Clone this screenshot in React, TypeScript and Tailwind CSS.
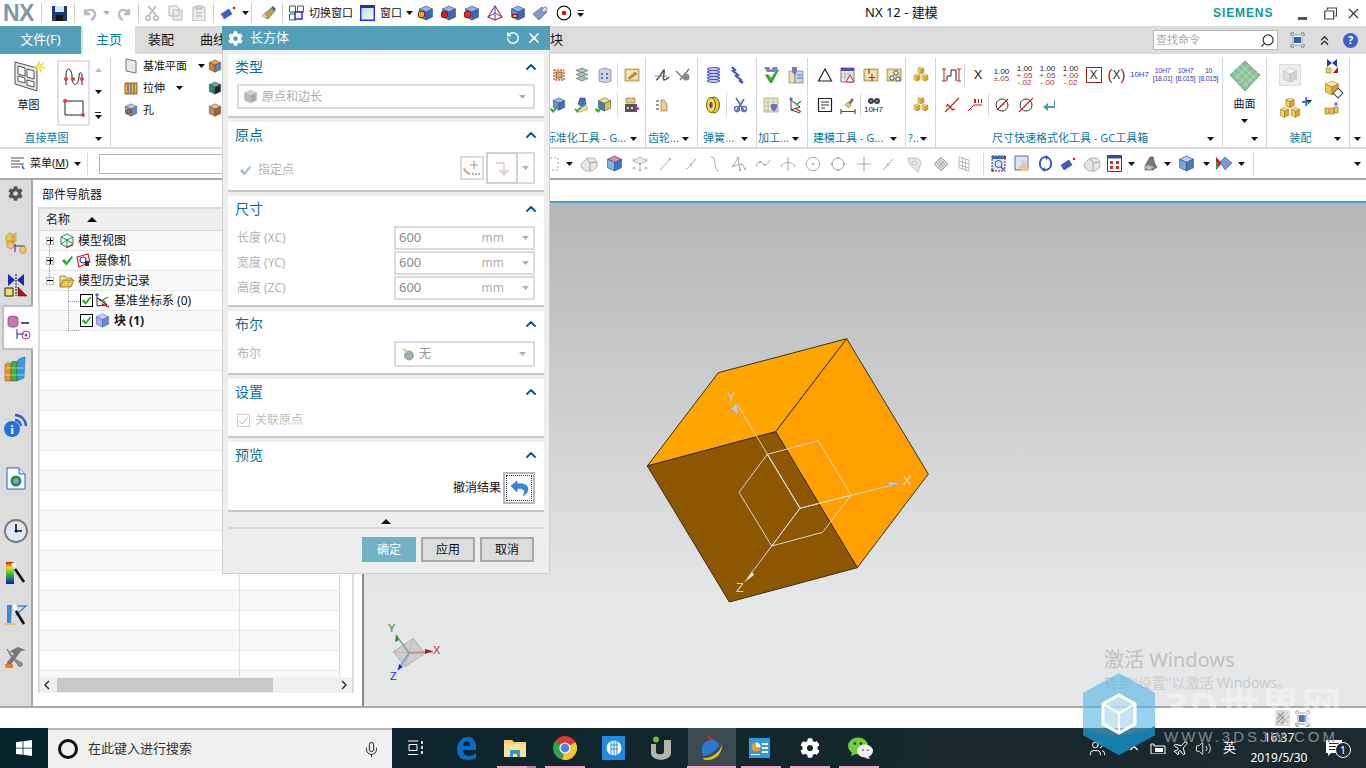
import { ChevronUp, Mic, Plane, RotateCw, Search, Volume2, X, Users, ChevronsUp } from 'lucide-react';
import { FaCog } from 'react-icons/fa';
import type { ReactNode } from 'react';

// small shared pieces
const Drop = ({ gray = false }: { gray?: boolean }) => (
  <svg width="7" height="4" viewBox="0 0 7 4" className="shrink-0">
    <path d="M0 0h7L3.5 4z" fill={gray ? '#b0b0b0' : '#111'} />
  </svg>
);

const Box = ({ s = 16, t = '#9dbbe8', l = '#6f93d8', r = '#4a6fc0', o = '#3a4a70' }: { s?: number; t?: string; l?: string; r?: string; o?: string }) => (
  <svg width={s} height={s} viewBox="0 0 16 16" className="shrink-0">
    <path d="M8 1l6.5 3L8 7 1.5 4z" fill={t} stroke={o} strokeWidth=".6" />
    <path d="M1.5 4L8 7v8l-6.5-3z" fill={l} stroke={o} strokeWidth=".6" />
    <path d="M14.5 4L8 7v8l6.5-3z" fill={r} stroke={o} strokeWidth=".6" />
  </svg>
);

const Ico = ({ w = 16, h = 16, children }: { w?: number; h?: number; children: ReactNode }) => (
  <svg width={w} height={h} viewBox={`0 0 ${w} ${h}`} className="shrink-0">
    {children}
  </svg>
);

const Check = ({ c = '#2fa82f', s = 14 }: { c?: string; s?: number }) => (
  <svg width={s} height={s} viewBox="0 0 14 14" className="shrink-0">
    <path d="M1 7.5l2.5-2 2.5 3L11.5 2 13 3.5 6 12.5z" fill={c} />
  </svg>
);

const YellowCubes = ({ s = 16 }: { s?: number }) => (
  <svg width={s} height={s} viewBox="0 0 16 16" className="shrink-0">
    {[
      [5, 0],
      [1, 7],
      [9, 7],
    ].map(([x, y]) => (
      <g key={`${x}-${y}`} transform={`translate(${x} ${y})`} stroke="#a88420" strokeWidth=".5">
        <path d="M3 0l3 1.3L3 2.6 0 1.3z" fill="#ffe9a0" />
        <path d="M0 1.3l3 1.3V7L0 5.7z" fill="#f6cf58" />
        <path d="M6 1.3L3 2.6V7l3-1.3z" fill="#d9a72c" />
      </g>
    ))}
  </svg>
);

const YellowCard = ({ mark }: { mark: 'cross' | 'circles' | 'pencil' }) => (
  <Ico>
    <path d="M1 2h14v12H1z" fill="#e8d48a" stroke="#8a7a50" strokeWidth=".7" />
    <path d="M3 4h10v8H3z" fill="#f3e6b8" />
    {mark === 'cross' && <path d="M9 7v7M5.5 10.5h7M6 2v5" stroke="#d02020" strokeWidth="1.2" fill="none" />}
    {mark === 'circles' && (
      <g fill="#fff" stroke="#333" strokeWidth=".9">
        <circle cx="10" cy="6" r="2.2" />
        <circle cx="6" cy="11" r="2.2" />
        <circle cx="12" cy="12" r="2.2" />
      </g>
    )}
    {mark === 'pencil' && <path d="M4 11l7-6 2 2-7 5z" fill="#e08a20" stroke="#555" strokeWidth=".5" />}
  </Ico>
);

const Gray = ({ kind }: { kind: number }) => {
  const c = '#a8a8a8';
  const p = { fill: 'none', stroke: c, strokeWidth: 1 };
  const dot = (x: number, y: number) => <circle cx={x} cy={y} r="1.3" fill="#b8b8b8" />;
  switch (kind) {
    case 0:
      return (
        <Ico>
          <path d="M2 2h12v12H2z" {...p} strokeDasharray="2 2" />
        </Ico>
      );
    case 1:
      return (
        <Ico w={18}>
          <path d="M1 8l6-6h7l3 4v5l-5 4H6L2 12z" fill="#e6e6e6" stroke="#b5b5b5" />
          <path d="M7 2l3 5v8M10 7l7-1" {...p} />
        </Ico>
      );
    case 2:
      return (
        <Ico w={18}>
          <path d="M9 1l7 4-7 3-7-3z M9 8v7" fill="#e8e8e8" stroke="#bbb" />
          {dot(3, 4)}
          {dot(15, 4)}
          {dot(3, 12)}
          {dot(15, 12)}
          {dot(9, 8)}
          {dot(9, 14)}
        </Ico>
      );
    case 3:
      return (
        <Ico>
          <path d="M3 14L13 3" {...p} />
          {dot(13, 3)}
        </Ico>
      );
    case 4:
      return (
        <Ico>
          <path d="M3 14L13 3" {...p} />
          {dot(8, 8.5)}
        </Ico>
      );
    case 5:
      return (
        <Ico>
          <path d="M4 1c7 0 1 13 8 14" {...p} />
        </Ico>
      );
    case 6:
      return (
        <Ico w={18}>
          <path d="M8 2l-5 8 9-2 3 5M8 2l2 12" {...p} />
          {dot(8, 2)}
          {dot(3, 10)}
          {dot(15, 13)}
          {dot(10, 14)}
        </Ico>
      );
    case 7:
      return (
        <Ico>
          <path d="M1 11c3-8 5-6 7-3s4 1 7-4" {...p} />
          {dot(5, 6)}
          {dot(10, 9)}
        </Ico>
      );
    case 8:
      return (
        <Ico>
          <path d="M8 1v14M1 11c1-6 13-6 14 0" {...p} />
        </Ico>
      );
    case 9:
      return (
        <Ico>
          <circle cx="8" cy="8" r="6.8" {...p} />
          {dot(8, 8)}
        </Ico>
      );
    case 10:
      return (
        <Ico>
          <circle cx="8" cy="8" r="6" {...p} />
          {dot(8, 2)}
          {dot(8, 14)}
          {dot(2, 8)}
          {dot(14, 8)}
        </Ico>
      );
    case 11:
      return (
        <Ico>
          <path d="M8 1v14M1 8h14" {...p} />
        </Ico>
      );
    case 12:
      return (
        <Ico w={18}>
          <path d="M2 2h8c3 0 5 3 5 5l-3 9C7 12 2 8 2 2z" fill="#e4e4e4" stroke="#c4c4c4" />
          <circle cx="8" cy="7" r="2" fill="#f5f5f5" stroke="#c0c0c0" />
        </Ico>
      );
    case 13:
      return (
        <Ico>
          <path d="M8 1l7 7-7 7-7-7z" fill="#d8d8d8" stroke="#aaa" />
          <path d="M4.5 4.5l7 7M11.5 4.5l-7 7M6 3l7 7M3 6l7 7" stroke="#999" strokeWidth=".6" />
        </Ico>
      );
    default:
      return (
        <Ico>
          <path d="M3 1l10 3v11L3 12z M3 5l10 3M3 9l10 3M6.5 2v11M9.5 3v11" fill="none" stroke="#aaa" strokeWidth=".8" />
        </Ico>
      );
  }
};

const Num = ({ a, b, c }: { a: string; b: string; c?: string }) => (
  <div className="flex flex-col items-center text-[8px] leading-[7px] font-['Liberation_Sans',sans-serif]">
    <span className="text-[#222]">{a}</span>
    <span className="text-[#b03030]">{b}</span>
    {c && <span className="text-[#b03030]">{c}</span>}
  </div>
);

const Hole = ({ l, b }: { l: string; b: string }) => (
  <div className="flex flex-col items-center text-[7px] leading-[8px] text-[#3a3ab8] font-['Liberation_Sans',sans-serif] tracking-[-0.3px]">
    <span>{l}</span>
    <span>{b}</span>
  </div>
);

const Slot = ({ w, children }: { w: number; children: ReactNode }) => (
  <div className="flex items-center justify-center shrink-0 h-full" style={{ width: w }}>
    {children}
  </div>
);

const VSep = () => <div className="w-px h-[24px] bg-[#d8d8d8] mx-[1px] shrink-0" />;

const Group = ({ w, label, children, labelClass = 'justify-center', line = true }: { w: number; label: string; children: ReactNode; labelClass?: string; line?: boolean }) => (
  <div className={`shrink-0 h-[89px] flex flex-col relative ${line ? 'border-r border-[#d4d4d4]' : ''}`} style={{ width: w }}>
    <div className="h-[72px] pt-[2px]">{children}</div>
    <div className={`h-[17px] flex items-center gap-[4px] text-[11px] text-[#0b7a9c] whitespace-nowrap ${labelClass}`}>
      <span>{label}</span>
    </div>
    <div className="absolute right-[8px] bottom-[6px]">
      <Drop />
    </div>
  </div>
);

const IconRow = ({ pl = 0, children }: { pl?: number; children: ReactNode }) => (
  <div className="h-[30px] flex items-center" style={{ paddingLeft: pl }}>
    {children}
  </div>
);

const Card = ({ title, h, children }: { title: string; h: number; children?: ReactNode }) => (
  <div className="bg-white border-b-2 border-[#c8c8c8] pl-[7px] pr-[9px] shrink-0 mb-[4px]" style={{ height: h }}>
    <div className="h-[24px] flex items-center justify-between pt-[1px]">
      <span className="text-[14px] text-[#0b6e8f]">{title}</span>
      <ChevronUp size={16} strokeWidth={3} className="text-[#0b5f7c] -mr-[4px]" />
    </div>
    {children}
  </div>
);

const Field = ({ label }: { label: string }) => (
  <div className="flex items-center justify-between h-[25px] pl-[2px]">
    <span className="text-[12px] text-[#b4b4b4]">{label}</span>
    <div className="w-[141px] h-[24px] border-2 border-[#dcdcdc] flex items-center justify-between pl-[3px] pr-[4px]">
      <span className="text-[13px] text-[#8a8a8a]">600</span>
      <div className="flex items-center gap-[18px]">
        <span className="text-[12px] text-[#b0b0b0]">mm</span>
        <Drop gray />
      </div>
    </div>
  </div>
);

const TreeCheck = () => (
  <span className="relative w-[13px] h-[13px] border-[1.5px] border-black bg-white shrink-0 flex items-center justify-center">
    <Check s={11} c="#1fb31f" />
  </span>
);

const Plus = ({ minus = false }: { minus?: boolean }) => (
  <span className="w-[8px] h-[8px] border border-[#b8b8b8] bg-white shrink-0 flex items-center justify-center relative text-[8px]">
    <span className="w-[6px] h-px bg-black" />
    {!minus && <span className="absolute h-[6px] w-px bg-black" />}
  </span>
);

const TreeRow = ({ i, children, pl = 46 }: { i: number; children?: ReactNode; pl?: number }) => (
  <div className={`h-[20px] shrink-0 border-b border-[#e8e8e8] flex items-center text-[12px] text-[#111] ${i % 2 ? 'bg-white' : 'bg-[#f9f9f9]'}`} style={{ paddingLeft: pl - 40 }}>
    {children}
  </div>
);

// resource bar button, 40px slot unless told otherwise
const SideBtn = ({ h = 40, mt = 0, children }: { h?: number; mt?: number; children: ReactNode }) => (
  <div className="flex items-center justify-center shrink-0" style={{ height: h, marginTop: mt }}>
    {children}
  </div>
);

export default function App() {
  return (
    <div className="relative w-[1366px] h-[768px] overflow-hidden flex flex-col bg-white font-['Noto_Sans','Noto_Sans_CJK_SC',sans-serif] text-[12px]">
      {/* title bar */}
      <div className="h-[26px] shrink-0 flex items-center relative">
        <div className="w-[865px] shrink-0 flex items-center">
          <span className="ml-[3px] w-[33px] text-[23px] leading-none font-bold text-[#7f97a9] font-['Liberation_Sans',sans-serif] tracking-[-0.5px]">NX</span>
          <div className="w-px h-[20px] bg-[#d0d0d0] ml-[5px] mr-[10px]" />
          <Ico w={15} h={15}>
            <path d="M0 0h15v15H0z" fill="#1c3a78" />
            <path d="M3 0h9v6H3z" fill="#d8e0f0" />
            <path d="M4 9h7v6H4z" fill="#111" />
          </Ico>
          <div className="w-px h-[20px] bg-[#d0d0d0] ml-[7px] mr-[7px]" />
          <Ico w={15} h={15}>
            <path d="M3 3v5h5M3 8c2-5 9-6 10 0 0 3-2 5-4 6" fill="none" stroke="#b4bcc4" strokeWidth="2.4" />
          </Ico>
          <div className="ml-[6px] mr-[7px]"><Drop gray /></div>
          <Ico w={15} h={15}>
            <path d="M12 3v5H7M12 8C10 3 3 2 2 8c0 3 2 5 4 6" fill="none" stroke="#b4bcc4" strokeWidth="2.4" />
          </Ico>
          <div className="w-px h-[20px] bg-[#d0d0d0] ml-[6px] mr-[6px]" />
          <Ico w={14} h={16}>
            <path d="M11 1L4 10M3 1l8 9" stroke="#b5b5b5" strokeWidth="1.5" fill="none" />
            <circle cx="3" cy="13" r="2.2" fill="none" stroke="#b5b5b5" strokeWidth="1.4" />
            <circle cx="11" cy="13" r="2.2" fill="none" stroke="#b5b5b5" strokeWidth="1.4" />
          </Ico>
          <div className="w-[9px]" />
          <Ico w={15} h={16}>
            <path d="M1 1h8l2 3v7H1zM5 5h9v10H5z" fill="#eee" stroke="#b8b8b8" />
          </Ico>
          <div className="w-[9px]" />
          <Ico w={14} h={16}>
            <path d="M1 2h12v14H1z" fill="#eee" stroke="#b8b8b8" />
            <path d="M4 1h6v3H4zM4 8h6M4 11h6" fill="#ddd" stroke="#b0b0b0" />
          </Ico>
          <div className="w-px h-[20px] bg-[#d0d0d0] ml-[7px] mr-[6px]" />
          <Ico w={17} h={16}>
            <path d="M1 9l8-5 3 5-8 5z" fill="#3f5fc0" stroke="#223a80" strokeWidth=".5" />
            <path d="M1 9l3 5 0-2z" fill="#88a4e8" />
            <circle cx="14" cy="3" r="1.3" fill="#e02020" />
          </Ico>
          <div className="ml-[5px]"><Drop /></div>
          <div className="w-px h-[20px] bg-[#d0d0d0] mr-[8px] ml-[2px]" />
          <Ico w={17} h={16}>
            <path d="M2 11l9-8 4 3-7 8z" fill="#c89a50" stroke="#665" strokeWidth=".6" />
            <path d="M11 3l4 3 1-2-3-3z" fill="#4a5f90" />
            <path d="M1 13l3-4 3 3z" fill="#e8d8a0" />
          </Ico>
          <div className="w-px h-[20px] bg-[#d0d0d0] ml-[5px] mr-[6px]" />
          <Ico w={15} h={16}>
            <path d="M.5 1h6v6h-6zM8.5 1h6v6h-6zM.5 9h6v6h-6z" fill="#fff" stroke="#555" />
            <path d="M6 7h7v7H6z" fill="#fff" stroke="#1a2ee0" strokeWidth="1.5" />
          </Ico>
          <span className="ml-[5px] text-[11px] text-[#111] whitespace-nowrap">切换窗口</span>
          <div className="w-[7px]" />
          <Ico w={15} h={16}>
            <defs>
              <linearGradient id="win" x1="0" y1="0" x2="1" y2="1">
                <stop offset="0" stopColor="#bcd2ea" />
                <stop offset="1" stopColor="#fff" />
              </linearGradient>
            </defs>
            <path d="M.7.7h13.6v14.6H.7z" fill="url(#win)" stroke="#1a2ee0" strokeWidth="1.4" />
            <path d="M1 2h13" stroke="#223a80" strokeWidth="2" />
          </Ico>
          <span className="ml-[5px] text-[11px] text-[#111] whitespace-nowrap">窗口</span>
          <div className="ml-[4px] mr-[5px]"><Drop /></div>
          {['#e8b020', '#d02020', '#e83020'].map((c) => (
            <div key={c} className="relative mr-[7px] w-[16px] h-[16px]">
              <Box s={16} t="#8fb5f0" l="#5a86dc" r="#3a66c0" />
              <span className="absolute left-[0px] top-[6px] w-[7px] h-[7px] rounded-[2px] border border-[#a01010]" style={{ background: c }} />
            </div>
          ))}
          <Ico w={16} h={16}>
            <path d="M8 1L1 12l7 3 7-3z" fill="none" stroke="#d03030" strokeWidth="1.2" />
            <path d="M8 1v14M1 12l7-4 7 4" fill="none" stroke="#3050c0" strokeWidth="1" />
          </Ico>
          <div className="w-[7px]" />
          <div className="relative w-[16px] h-[16px] mr-[6px]">
            <Box s={16} t="#8fb5f0" l="#5a86dc" r="#3a66c0" />
            <span className="absolute left-[2px] top-[9px] w-[6px] h-[4px] bg-[#e8a020] border border-[#a01010]" />
          </div>
          <Ico w={16} h={16}>
            <path d="M1 9l9-7 5 5-8 8z" fill="#7f9cc8" stroke="#456" strokeWidth=".6" />
            <ellipse cx="12.5" cy="4.5" rx="2" ry="3" transform="rotate(45 12.5 4.5)" fill="#d8e4f4" stroke="#456" strokeWidth=".6" />
          </Ico>
          <div className="w-[8px]" />
          <Ico w={16} h={16}>
            <circle cx="8" cy="8" r="6.8" fill="#fff" stroke="#111" strokeWidth="1.2" />
            <circle cx="8" cy="8" r="2.3" fill="#d01818" />
          </Ico>
          <div className="ml-[5px] flex flex-col gap-[2px] items-center">
            <div className="w-[6px] h-px bg-[#333]" />
            <Drop />
          </div>
        </div>
        <span className="w-[348px] shrink-0 text-[13px] text-[#111] whitespace-nowrap">NX 12 - 建模</span>
        <span className="text-[12px] font-bold text-[#0f9a9a] font-['Liberation_Sans',sans-serif] tracking-[0.9px]">SIEMENS</span>
        <div className="ml-auto mr-[4px] flex items-center">
          <div className="w-[9px] h-[3px] bg-[#555] mt-[10px] mr-[17px]" />
          <Ico w={13} h={13}>
            <path d="M3.5 3V1h9v8h-2" fill="none" stroke="#444" strokeWidth="1.2" />
            <path d="M.7 4h9v8h-9z" fill="#fff" stroke="#444" strokeWidth="1.2" />
          </Ico>
          <X size={17} strokeWidth={1.6} className="text-[#333] ml-[8px]" />
        </div>
      </div>

      {/* ribbon tabs */}
      <div className="h-[28px] shrink-0 bg-[#dcdcdc] flex items-stretch text-[13px]">
        <div className="w-[81px] bg-[#55a0b9] text-white flex items-center justify-center">文件(F)</div>
        <div className="w-[52px] ml-[2px] bg-white text-[#0b7a9c] flex items-center justify-center">主页</div>
        <span className="ml-[13px] self-center text-[#111]">装配</span>
        <span className="ml-[26px] self-center text-[#111]">曲线</span>
        <span className="ml-[324px] self-center text-[#111]">块</span>
        <div className="ml-[590px] mt-[4px] w-[125px] h-[20px] bg-white border border-[#b8b8b8] flex items-center justify-between px-[2px] text-[11px] text-[#a8a8a8]">
          <span>查找命令</span>
          <Search size={15} className="text-[#333] -scale-x-100" />
        </div>
        <div className="ml-[12px] self-center">
          <Ico w={15} h={16}>
            <path d="M1 4V1h3M11 1h3v3M14 12v3h-3M4 15H1v-3" fill="none" stroke="#777" />
            <path d="M3 3h9v10H3z" fill="#fff" stroke="#999" />
            <path d="M4 5h7v6H4z" fill="#2d62b0" />
          </Ico>
        </div>
        <ChevronsUp size={15} className="self-center ml-[12px] text-[#222]" />
        <div className="self-center ml-[11px] w-[15px] h-[15px] rounded-full bg-[#3a62c8] text-white text-[11px] font-bold flex items-center justify-center">?</div>
      </div>

      {/* ribbon body */}
      <div className="h-[93px] shrink-0 flex items-start pt-[4px] bg-white">
        <Group w={111} label="直接草图" labelClass="justify-center pr-[17px]">
          <div className="flex h-full">
            <div className="w-[57px] flex flex-col items-center">
              <Ico w={32} h={32}>
                <path d="M2 2l22 6v23L2 24z" fill="#e4e4e4" stroke="#555" />
                <path d="M5 6l7 2v8l-7-2zM14 9l7 2v8l-7-2zM5 16l7 2v5l-7-2zM14 20l7 2v5l-7-2z" fill="#fff" stroke="#555" />
                <path d="M26 1l1 4 4-2-3 3 4 2-4 0 0 4-2-3-3 2 1-3-4-1 4-1z" fill="#f4ee50" stroke="#d8c830" strokeWidth=".5" />
              </Ico>
              <span className="mt-[5px] text-[11px] text-[#111]">草图</span>
            </div>
            <div className="w-[33px] h-[66px] border-2 border-[#e2e2e2] flex flex-col items-center justify-around py-[2px]">
              <Ico w={24} h={24}>
                <path d="M4 18V8c0-8 6-8 6 2s6 10 7 0c0-5 2-6 3-2v10" fill="none" stroke="#222" />
                <circle cx="4" cy="12" r="2" fill="#d84040" />
                <circle cx="11" cy="12" r="2" fill="#d84040" />
                <circle cx="20" cy="12" r="2" fill="#d84040" />
              </Ico>
              <Ico w={24} h={24}>
                <path d="M3 5h18v14H3z" fill="none" stroke="#222" />
                <circle cx="3" cy="5" r="2" fill="#d84040" />
                <circle cx="21" cy="19" r="2" fill="#d84040" />
              </Ico>
            </div>
            <div className="w-[16px] flex flex-col items-center pt-[8px] gap-[18px]">
              <svg width="7" height="4" viewBox="0 0 7 4"><path d="M0 4h7L3.5 0z" fill="#bbb" /></svg>
              <Drop />
              <div className="flex flex-col items-center gap-[2px]">
                <div className="w-[6px] h-px bg-[#222]" />
                <Drop />
              </div>
            </div>
          </div>
        </Group>

        <Group w={359} label="" line={false}>
          <div className="pl-[13px] -mt-[5px] flex">
            <div className="flex flex-col w-[84px] text-[11px]">
              <div className="h-[22px] flex items-center gap-[5px] text-[#111]">
                <Ico w={14} h={16}>
                  <path d="M2 1l10 2v12l-10-2z" fill="#e8ebe4" stroke="#777" />
                </Ico>
                基准平面
                <div className="ml-[6px]"><Drop /></div>
              </div>
              <div className="h-[22px] flex items-center gap-[5px] text-[#111]">
                <Ico w={14} h={16}>
                  <path d="M1 3h12v11H1z" fill="#f0b040" stroke="#a06010" />
                  <path d="M4 3v11M7 3v11M10 3v11" stroke="#2a60c0" />
                </Ico>
                拉伸
                <div className="ml-[6px]"><Drop /></div>
              </div>
              <div className="h-[22px] flex items-center gap-[5px] text-[#111]">
                <div className="relative w-[14px] h-[14px]">
                  <Box s={14} t="#b8c8e8" l="#8da6d8" r="#6b88c8" />
                  <span className="absolute left-[2px] top-[6px] w-[5px] h-[5px] rounded-full bg-[#e07020] border border-[#902010]" />
                </div>
                孔
              </div>
            </div>
            <div className="flex flex-col">
              <div className="h-[22px] flex items-center"><Box s={14} t="#f0a040" l="#d88020" r="#6080c0" /></div>
              <div className="h-[22px] flex items-center"><Box s={14} t="#60b0a0" l="#308070" r="#222" /></div>
              <div className="h-[22px] flex items-center"><Box s={14} t="#f0c080" l="#d88040" r="#b06020" /></div>
            </div>
          </div>
        </Group>

        <Group w={176} label="标准化工具 - G..." labelClass="justify-end pr-[19px]">
          <div className="flex flex-col items-end">
            <IconRow>
              <Slot w={23}>
                <Ico w={14} h={14}>
                  <path d="M2 2h10v10H2z" fill="#f4e6c0" stroke="#d02020" strokeDasharray="2 1" />
                  <path d="M4 4h6v6H4z" fill="#e8b040" stroke="#333" strokeWidth=".6" />
                </Ico>
              </Slot>
              <Slot w={23}>
                <Ico w={14} h={16}>
                  {[1, 5, 9].map((y) => (
                    <path key={y} d={`M7 ${y}l6 2.5-6 2.5-6-2.5z`} fill="#a8c8a8" stroke="#557" strokeWidth=".6" />
                  ))}
                </Ico>
              </Slot>
              <Slot w={23}>
                <Ico w={14} h={16}>
                  <path d="M1 3l6-2 6 2v11l-6 2-6-2z" fill="#c8d4e8" stroke="#667" strokeWidth=".6" />
                  <path d="M3 6h2v2H3zM8 6h2v2H8zM3 10h2v2H3zM8 10h2v2H8z" fill="#5a7ab0" />
                </Ico>
              </Slot>
              <VSep />
              <Slot w={26}><YellowCard mark="pencil" /></Slot>
            </IconRow>
            <IconRow>
              <Slot w={23}>
                <div className="relative w-[14px] h-[16px]">
                  <Box s={14} />
                  <div className="absolute left-[-3px] bottom-[-1px]"><Check s={10} /></div>
                </div>
              </Slot>
              <Slot w={23}>
                <Ico w={16} h={16}>
                  <path d="M6 1h5l1 6-4 3-4-3z" fill="#4a6fc8" stroke="#234" strokeWidth=".5" />
                  <path d="M2 15l10-7 2 4-8 3z" fill="#f0e090" stroke="#665" strokeWidth=".5" />
                  <path d="M1 12l2 2 4-4" stroke="#2aa82a" strokeWidth="1.6" fill="none" />
                </Ico>
              </Slot>
              <Slot w={23}>
                <div className="relative w-[16px] h-[16px]">
                  <Box s={15} t="#f4e080" l="#4a78d0" r="#e8c040" />
                  <div className="absolute left-[-3px] bottom-[-1px]"><Check s={10} /></div>
                </div>
              </Slot>
              <VSep />
              <Slot w={26}>
                <Ico w={16} h={16}>
                  <path d="M2 1h9v5H2z" fill="#e8c878" stroke="#765" strokeWidth=".6" />
                  <path d="M1 7h12v8H1z" fill="#555" />
                  <path d="M3 10h2v2H3zM7 10h2v2H7z" fill="#e8d8a0" />
                  <path d="M12 9l4 2.5-4 2.5z" fill="#b040c0" />
                </Ico>
              </Slot>
            </IconRow>
          </div>
        </Group>

        <Group w={52} label="齿轮..." labelClass="pl-[2px] justify-start">
          <IconRow pl={5}>
            <Slot w={21}>
              <Ico w={16} h={14}>
                <path d="M2 12c4-2 6-9 8-10 1 3-2 8 0 10 1 0 3-1 5-3" fill="none" stroke="#555" strokeWidth="1.6" />
                <path d="M1 8h12" stroke="#888" />
              </Ico>
            </Slot>
            <Slot w={21}>
              <Ico w={17} h={14}>
                <path d="M2 3l7 7M15 1L6 12" stroke="#777" strokeWidth="1.4" fill="none" />
                <circle cx="12" cy="9" r="3.5" fill="#888" />
              </Ico>
            </Slot>
          </IconRow>
          <IconRow pl={5}>
            <Slot w={21}>
              <Ico w={14} h={14}>
                <path d="M1 3h3M1 7h3M1 11h3" stroke="#333" />
                <path d="M6 2h3l3 4v7H6z" fill="#f0c890" stroke="#864" strokeWidth=".6" />
              </Ico>
            </Slot>
          </IconRow>
        </Group>

        <Group w={59} label="弹簧..." labelClass="pl-[5px] justify-start">
          <IconRow pl={3}>
            <Slot w={24}>
              <Ico w={13} h={16}>
                {[2, 5, 8, 11, 14].map((y) => (
                  <ellipse key={y} cx="6.5" cy={y} rx="6" ry="1.3" fill="none" stroke="#4a58b8" strokeWidth="1.3" />
                ))}
              </Ico>
            </Slot>
            <Slot w={24}>
              <Ico w={14} h={18}>
                <path d="M2 1l3 3-2 1 5 4-2 1 5 4-1 1 3 2" fill="none" stroke="#4a58b8" strokeWidth="2.2" />
              </Ico>
            </Slot>
          </IconRow>
          <IconRow pl={3}>
            <Slot w={24}>
              <Ico w={14} h={18}>
                <ellipse cx="8" cy="9" rx="5.5" ry="8" fill="#e8c838" stroke="#776010" />
                <ellipse cx="5" cy="9" rx="4.5" ry="7.5" fill="#f0d858" stroke="#776010" />
                <ellipse cx="5" cy="9" rx="1.6" ry="3" fill="#555" />
              </Ico>
            </Slot>
            <VSep />
            <Slot w={24}>
              <Ico w={15} h={17}>
                <path d="M3 1l9 14M11 2L3 15" stroke="#5a6a9a" strokeWidth="1.5" fill="none" />
                <circle cx="4" cy="12" r="2.5" fill="none" stroke="#5a70c8" strokeWidth="1.4" />
                <circle cx="11" cy="12" r="2.5" fill="none" stroke="#5a70c8" strokeWidth="1.4" />
              </Ico>
            </Slot>
          </IconRow>
        </Group>

        <Group w={51} label="加工..." labelClass="pl-[1px] justify-start">
          <IconRow pl={1}>
            <Slot w={25}>
              <Ico w={16} h={18}>
                <path d="M1 1h5l2 3 2-3h5l-3 5H4z" fill="#8a7ac8" />
                <path d="M2 9l3-1 3 4 6-9 2 1-7 13h-2z" fill="#38a838" />
              </Ico>
            </Slot>
            <Slot w={25}>
              <Ico w={16} h={18}>
                <path d="M1 5h6v12H1z" fill="#e8e0b0" stroke="#776" strokeWidth=".6" />
                <path d="M7 5h8v12H7z" fill="#c8d8f0" stroke="#567" strokeWidth=".6" />
                <path d="M4 1h5v5l-2 3-3-3z" fill="#7a78c8" />
                <path d="M9 9h5M9 12h5" stroke="#5070b0" />
              </Ico>
            </Slot>
          </IconRow>
          <IconRow pl={1}>
            <Slot w={25}>
              <div className="relative">
                <Ico w={16} h={16}>
                  <path d="M1 1h14v14H1z" fill="#f0e8c0" stroke="#999" strokeWidth=".7" />
                  <path d="M1 5h14M1 9h14M1 13h14M5 1v14M10 1v14" stroke="#b8b8a0" strokeWidth=".7" />
                  <path d="M8 7h6v4l-3 4-3-4z" fill="#6a70c8" />
                </Ico>
              </div>
            </Slot>
            <Slot w={25}>
              <Ico w={17} h={17}>
                <path d="M4 3v10l9-3zM4 13l9 3" fill="#eee" stroke="#444" />
                <path d="M4 0v4M2 2h4" stroke="#3050c0" />
                <path d="M9 8l5-4" stroke="#2aa82a" strokeWidth="1.4" />
                <path d="M8 11l6 4" stroke="#d02020" strokeWidth="1.4" />
              </Ico>
            </Slot>
          </IconRow>
        </Group>

        <Group w={98} label="建模工具 - G..." labelClass="pl-[5px] justify-start">
          <IconRow pl={5}>
            <Slot w={23}>
              <Ico>
                <path d="M8 2l6.5 12h-13z" fill="none" stroke="#222" strokeWidth="1.2" />
              </Ico>
            </Slot>
            <Slot w={23}>
              <div className="relative">
                <Ico w={15} h={16}>
                  <path d="M1 1h13v14H1z" fill="#eee" stroke="#777" />
                  <path d="M1 1h13v3H1z" fill="#4a56a8" />
                  <path d="M1 7h13M1 10h13M5 4v11M9 4v11" stroke="#bbb" />
                  <path d="M10 8l4 7H6z" fill="#fff" stroke="#d02020" />
                </Ico>
              </div>
            </Slot>
            <Slot w={23}><YellowCard mark="cross" /></Slot>
            <Slot w={23}><YellowCard mark="circles" /></Slot>
          </IconRow>
          <IconRow pl={5}>
            <Slot w={23}>
              <Ico>
                <path d="M1.5 1.5h13v13h-13z" fill="#fff" stroke="#222" strokeWidth="1.2" />
                <path d="M4 5h8M4 8h8M4 11h4" stroke="#333" />
              </Ico>
            </Slot>
            <Slot w={23}>
              <Ico w={16} h={17}>
                <path d="M12 1l2 2-4 5-2-2z" fill="#807090" />
                <path d="M8 5l3 3-2 3-4-3z" fill="#e8c858" stroke="#765" strokeWidth=".5" />
                <path d="M1 12v5M15 12v5M1 14.5h14" stroke="#c02020" strokeWidth="1.2" />
              </Ico>
            </Slot>
            <VSep />
            <Slot w={23}>
              <div className="flex flex-col items-center">
                <Ico w={14} h={8}>
                  <circle cx="4" cy="4" r="3" fill="#444" />
                  <circle cx="10" cy="4" r="3" fill="#444" />
                  <circle cx="4" cy="4" r="1" fill="#88a" />
                  <circle cx="10" cy="4" r="1" fill="#88a" />
                </Ico>
                <span className="text-[8px] leading-[9px] text-[#222] font-['Liberation_Sans',sans-serif]">10H7</span>
              </div>
            </Slot>
          </IconRow>
        </Group>

        <Group w={30} label="?.." labelClass="pl-[2px] justify-start">
          <IconRow>
            <Slot w={30}><YellowCubes /></Slot>
          </IconRow>
          <IconRow>
            <Slot w={30}><YellowCubes /></Slot>
          </IconRow>
        </Group>

        <Group w={287} label="尺寸快速格式化工具 - GC工具箱" labelClass="pl-[56px] justify-start">
          <IconRow pl={4}>
            <Slot w={23}>
              <Ico w={19} h={16}>
                <path d="M2 2v12M0 2h4M0 14h4M17 2v12M15 2h4M15 14h4" stroke="#c02020" fill="none" />
                <path d="M5 14V9h4V3h5v11" fill="none" stroke="#222" />
              </Ico>
            </Slot>
            <VSep />
            <Slot w={24}>
              <span className="text-[13px] text-[#222] font-['Liberation_Sans',sans-serif]">X</span>
            </Slot>
            <Slot w={23}><Num a="1.00" b="±.05" /></Slot>
            <Slot w={23}><Num a="1.00" b="+.05" c="-.02" /></Slot>
            <Slot w={23}><Num a="1.00" b="+.05" c="-.00" /></Slot>
            <Slot w={23}><Num a="1.00" b="+.00" c="-.02" /></Slot>
            <Slot w={23}>
              <span className="w-[16px] h-[16px] border border-[#9c2020] flex items-center justify-center text-[12px] text-[#333] font-['Liberation_Sans',sans-serif]">X</span>
            </Slot>
            <Slot w={23}>
              <span className="flex items-center text-[12px] text-[#333] font-['Liberation_Sans',sans-serif]"><span className="text-[#a02020] text-[15px]">(</span>X<span className="text-[#a02020] text-[15px]">)</span></span>
            </Slot>
            <Slot w={23}>
              <span className="text-[8px] text-[#3a3ab8] font-['Liberation_Sans',sans-serif]">10H7</span>
            </Slot>
            <Slot w={23}><Hole l="10H7" b="[18.01]" /></Slot>
            <Slot w={23}><Hole l="10H7" b="[8.015]" /></Slot>
            <Slot w={23}><Hole l="10" b="[8.015]" /></Slot>
          </IconRow>
          <IconRow pl={4}>
            <Slot w={23}>
              <Ico w={16} h={16}>
                <path d="M1 15L15 1M3 7l6 6M3 8l-1 2M9 13l2-1" stroke="#c02020" fill="none" strokeWidth="1.1" />
              </Ico>
            </Slot>
            <Slot w={24}>
              <Ico w={16} h={14}>
                <path d="M1 13l6-6h8M3 10l2 2" stroke="#c02020" fill="none" />
                <path d="M7 1h2v4H7zM11 1h1v4h-1zM14 1h1v4h-1z" fill="#c02020" />
              </Ico>
            </Slot>
            <VSep />
            <Slot w={24}>
              <Ico w={16} h={16}>
                <circle cx="8" cy="8" r="6" fill="none" stroke="#333" />
                <path d="M3 13L14 2M6 9l4-2" stroke="#c02020" strokeWidth="1.1" />
              </Ico>
            </Slot>
            <Slot w={24}>
              <Ico w={16} h={16}>
                <circle cx="8" cy="8" r="6" fill="none" stroke="#333" />
                <path d="M1 15L15 1" stroke="#c02020" strokeWidth="1.1" />
              </Ico>
            </Slot>
            <Slot w={21}>
              <Ico w={12} h={12}>
                <path d="M11 1v6H5V4L0 8l5 4V9h7V1z" fill="#4aa0a8" />
              </Ico>
            </Slot>
          </IconRow>
        </Group>

        <Group w={44} label="">
          <div className="flex flex-col items-center">
            <Ico w={32} h={32}>
              <path d="M1 15L16 1l15 14-15 16z" fill="#8ac09c" stroke="#5a9070" strokeWidth=".7" />
              <path d="M4 12l15 14M8 8l15 14M12 5l15 14M6 19L21 4M10 23L26 8M14 27L29 12" stroke="#d8eadc" strokeWidth=".6" />
            </Ico>
            <span className="mt-[4px] text-[11px] text-[#111]">曲面</span>
            <div className="mt-[6px]"><Drop /></div>
          </div>
        </Group>

        <Group w={83} label="装配" labelClass="justify-center pr-[15px]">
          <div className="flex h-full pl-[12px]">
            <div className="w-[30px] flex flex-col items-start pt-[4px]">
              <div className="w-[22px] h-[22px] border border-[#ddd] bg-[#eee] flex items-center justify-center">
                <Box s={16} t="#f4f4f4" l="#e0e0e0" r="#d0d0d0" o="#c0c0c0" />
              </div>
              <div className="relative mt-[12px]">
                <YellowCubes s={22} />
                <span className="absolute -right-[10px] -top-[5px] text-[#2a70e0] text-[17px] font-bold leading-none">+</span>
              </div>
            </div>
            <div className="pt-[32px] w-[13px]"><div className="mt-[8px] -ml-[4px]"><Drop /></div></div>
            <div className="flex flex-col items-center gap-[6px] w-[20px] -mt-[1px]">
              <Ico w={14} h={15}>
                <path d="M2 0l5 4 5-4v8L7 4 2 8z" fill="#2a3ac0" />
                <path d="M1 9h5v5H1z" fill="#f0d050" stroke="#654" strokeWidth=".5" />
                <path d="M8 14l5-6v6z" fill="#b01818" />
              </Ico>
              <div className="relative">
                <Box s={16} t="#fce8a8" l="#f0c850" r="#dca028" o="#9a7a20" />
                <span className="absolute right-[-2px] bottom-[-1px] w-[8px] h-[8px] bg-white border border-[#444] rotate-45" />
              </div>
              <Ico w={16} h={13}>
                <path d="M1 6h4v6H1zM6 6h4v6H6zM10 5h4v6h-4z" fill="#f0c060" stroke="#a07820" strokeWidth=".7" />
                <path d="M12 0v4M10 2h4" stroke="#2a70e0" strokeWidth="1.2" />
              </Ico>
            </div>
          </div>
        </Group>

        <div className="w-[16px] h-[89px] relative">
          <div className="absolute right-[5px] bottom-[6px]"><Drop /></div>
        </div>
      </div>

      {/* secondary toolbar */}
      <div className="h-[33px] shrink-0 border-t-2 border-[#dcdcdc] border-b-2 border-b-[#a8a8a8] flex items-center">
        <div className="pl-[10px] w-[87px] flex items-center shrink-0">
          <Ico w={16} h={15}>
            <path d="M1 2h13M1 5h9M1 8h13M1 11h9" stroke="#555" />
            <path d="M11 7l4 6-2 0 0 2z" fill="#3a72c0" />
          </Ico>
          <span className="ml-[4px] text-[11px] text-[#111]">菜单(<span className="underline">M</span>)</span>
          <div className="ml-[5px]"><Drop /></div>
        </div>
        <div className="w-px h-[22px] bg-[#d8d8d8]" />
        <div className="ml-[11px] w-[130px] h-[20px] border border-[#b4b4b4] shrink-0" />
        <div className="ml-[313px] flex items-center h-full">
          <Slot w={20}><Gray kind={0} /></Slot>
          <Slot w={14}><Drop /></Slot>
          <Slot w={26}><Gray kind={1} /></Slot>
          <Slot w={25}><Box s={17} t="#e88a9a" l="#7ab8e8" r="#3a78c8" /></Slot>
          <Slot w={25}><Gray kind={2} /></Slot>
          <Slot w={26}><Gray kind={3} /></Slot>
          <Slot w={25}><Gray kind={4} /></Slot>
          <Slot w={23}><Gray kind={5} /></Slot>
          <Slot w={25}><Gray kind={6} /></Slot>
          <Slot w={24}><Gray kind={7} /></Slot>
          <Slot w={25}><Gray kind={8} /></Slot>
          <Slot w={25}><Gray kind={9} /></Slot>
          <Slot w={26}><Gray kind={10} /></Slot>
          <Slot w={25}><Gray kind={11} /></Slot>
          <Slot w={24}><Gray kind={4} /></Slot>
          <Slot w={30}><Gray kind={12} /></Slot>
          <Slot w={22}><Gray kind={13} /></Slot>
          <Slot w={23}><Gray kind={14} /></Slot>
        </div>
        <div className="w-px h-[22px] bg-[#d8d8d8] ml-[8px]" />
        <div className="flex items-center h-full ml-[3px]">
          <Slot w={23}>
            <Ico w={15} h={17}>
              <path d="M1 1h13v15H1z" fill="#dbe6f4" stroke="#1a2ea8" strokeDasharray="2 1" />
              <path d="M1 1h13v3H1z" fill="#4a66b8" />
              <circle cx="7.5" cy="9" r="3.5" fill="none" stroke="#555" />
              <path d="M10 12l3 3" stroke="#555" strokeWidth="1.4" />
              <circle cx="1.5" cy="15.5" r="1.3" fill="#d02020" />
              <circle cx="14" cy="2" r="1.3" fill="#d02020" />
            </Ico>
          </Slot>
          <Slot w={23}>
            <Ico w={16} h={17}>
              <path d="M1 1h13v14H1z" fill="#dbe6f4" stroke="#5a6a98" />
              <path d="M7 8V5h1v3h1V4h1v4h1V5h1v5l3 3-1 3H8l-4-4 1-1 2 1z" fill="#e8c498" />
            </Ico>
          </Slot>
          <Slot w={24}>
            <Ico w={17} h={17}>
              <path d="M9 2c-8 0-8 12-1 13M8 15c8 0 8-12 1-13" fill="none" stroke="#3a5ab8" strokeWidth="2" />
              <path d="M9 0l3 2.5L9 5zM8 12l-3 3 3 2z" fill="#3a5ab8" />
            </Ico>
          </Slot>
          <Slot w={23}>
            <Ico w={17} h={16}>
              <path d="M1 9l8-5 3 5-8 5z" fill="#3f5fc0" stroke="#223a80" strokeWidth=".5" />
              <circle cx="14" cy="3" r="1.3" fill="#e02020" />
            </Ico>
          </Slot>
          <Slot w={24}><Gray kind={1} /></Slot>
          <Slot w={21}>
            <Ico w={15} h={17}>
              <path d="M.5.5h14v16H.5z" fill="#fff" stroke="#223a98" />
              <path d="M.5.5h14v3H.5z" fill="#3a4ea8" />
              <path d="M3 6h3v3H3zM9 6h3v3H9zM3 11h3v3H3zM9 11h3v3H9z" fill="#d83030" />
            </Ico>
          </Slot>
          <Slot w={12}><Drop /></Slot>
          <Slot w={25}>
            <Ico w={16} h={15}>
              <path d="M3 10L8 1h3l2 7 2 3-4 3H3z" fill="#777" stroke="#444" strokeWidth=".6" />
              <path d="M1 12l5-3 6 2-4 3z" fill="#bbb" />
            </Ico>
          </Slot>
          <Slot w={11}><Drop /></Slot>
          <Slot w={27}><Box s={17} t="#b4d2f0" l="#7aa4dc" r="#4878c0" /></Slot>
          <Slot w={12}><Drop /></Slot>
          <Slot w={24}>
            <Ico w={18} h={15}>
              <path d="M1 1l6 6-6 7z" fill="#d02020" />
              <path d="M5 6l5 8 7-7-7-6z" fill="#7a9ad8" stroke="#345" strokeWidth=".5" />
              <path d="M2 6v7" stroke="#2aa82a" strokeWidth="2" />
            </Ico>
          </Slot>
          <Slot w={10}><Drop /></Slot>
        </div>
        <div className="w-px h-[22px] bg-[#d8d8d8] ml-[7px]" />
        <div className="ml-auto mr-[5px]"><Drop /></div>
      </div>

      {/* main */}
      <div className="h-[526px] shrink-0 flex">
        {/* resource bar */}
        <div className="w-[33px] shrink-0 bg-[#dcdcdc] border-r-2 border-[#a8a8a8] flex flex-col pt-[1px]">
          <SideBtn h={24}>
            <FaCog size={15} className="text-[#555]" />
          </SideBtn>
          <SideBtn mt={17}>
            <Ico w={24} h={24}>
              <path d="M2 6l4-3 4 3v5l-4 2-4-2zM8 6l4-3 0 8-4 2zM3 12l4-2 3 2v5l-3 2-4-2z" fill="#f0c850" stroke="#a88020" strokeWidth=".6" />
              <path d="M11 14v8M11 16h10" stroke="#1a2ac0" />
              <path d="M16 18l3-2 3 2v4l-3 2-3-2z" fill="#f0c850" stroke="#a88020" strokeWidth=".6" />
            </Ico>
          </SideBtn>
          <SideBtn mt={3}>
            <Ico w={24} h={24}>
              <path d="M4 1l7 6-7 6zM20 1l-7 6 7 6z" fill="#1a2ac0" />
              <path d="M12 1v22" stroke="#111" strokeDasharray="2 1" />
              <path d="M1 15h8v8H1z" fill="#f4e060" stroke="#222" />
              <path d="M14 14l9 9h-9z" fill="#c01010" stroke="#222" strokeWidth=".5" />
            </Ico>
          </SideBtn>
          <div className="h-[45px] w-[31px] ml-[2px] shrink-0 bg-white border-y-2 border-l-2 border-[#c0c0c0] rounded-l-[2px] flex items-center justify-center">
            <Ico w={24} h={26}>
              <ellipse cx="6" cy="3" rx="5" ry="2" fill="#c878b0" stroke="#802060" strokeWidth=".6" />
              <path d="M1 3v7c0 3 10 3 10 0V3" fill="#c878b0" stroke="#802060" strokeWidth=".6" />
              <path d="M14 8h8M10 14v10M10 19h7" stroke="#1a2ac0" />
              <path d="M14 8h8" stroke="#111" />
              <circle cx="19" cy="20" r="4" fill="none" stroke="#a04090" />
              <circle cx="19" cy="20" r="1.5" fill="#a04090" />
            </Ico>
          </div>
          <SideBtn h={38}>
            <Ico w={24} h={26}>
              <path d="M1 9c0-2 5-3 6-1v17H1z" fill="#e8902a" stroke="#8a5010" strokeWidth=".5" />
              <path d="M7 7c0-2 5-2 6-1v19H7z" fill="#40b040" stroke="#1a7010" strokeWidth=".5" />
              <path d="M13 5c1-2 6-4 8-4l-1 21-7 3z" fill="#3a98e0" stroke="#1a5ea0" strokeWidth=".5" />
              <path d="M1 12h19M1 19h19" stroke="#fff" strokeOpacity=".5" />
            </Ico>
          </SideBtn>
          <SideBtn mt={17}>
            <Ico w={25} h={25}>
              <path d="M12 2c6 0 11 5 11 11M12 7c3 0 6 3 6 6" fill="none" stroke="#3060c0" strokeWidth="2.4" />
              <circle cx="9" cy="16" r="8" fill="#1f72d8" />
              <text x="9" y="21" textAnchor="middle" fontSize="13" fontWeight="bold" fill="#fff" fontFamily="Liberation Serif">i</text>
            </Ico>
          </SideBtn>
          <SideBtn mt={13}>
            <Ico w={20} h={23}>
              <path d="M1 1h12l6 6v15H1z" fill="#fff" stroke="#2a5ec8" />
              <path d="M13 1v6h6" fill="#dfe8f8" stroke="#2a5ec8" />
              <circle cx="10" cy="14" r="5.5" fill="#2e8a48" />
              <circle cx="10" cy="14" r="2.8" fill="#6ea8e0" />
            </Ico>
          </SideBtn>
          <SideBtn mt={13}>
            <Ico w={24} h={24}>
              <circle cx="12" cy="12" r="11" fill="#dfe8f4" stroke="#777" strokeWidth="1.8" />
              <path d="M12 5v7h6" fill="none" stroke="#111" strokeWidth="1.6" />
              <circle cx="12" cy="12" r="1.5" fill="#111" />
            </Ico>
          </SideBtn>
          <SideBtn mt={2}>
            <Ico w={22} h={24}>
              <defs>
                <linearGradient id="rb" x1="0" y1="0" x2="0" y2="1">
                  <stop offset="0" stopColor="#e01010" />
                  <stop offset=".25" stopColor="#f0e020" />
                  <stop offset=".55" stopColor="#30c030" />
                  <stop offset="1" stopColor="#1010d8" />
                </linearGradient>
              </defs>
              <path d="M1 1h8v22H1z" fill="url(#rb)" />
              <path d="M10 8l9 13" stroke="#111" strokeWidth="2.6" />
              <circle cx="9" cy="4" r="2.4" fill="#fff" />
            </Ico>
          </SideBtn>
          <SideBtn mt={2}>
            <Ico w={24} h={24}>
              <path d="M3 2h5l-1 18H3z" fill="#3a88d8" />
              <path d="M10 3h12L12 12" fill="none" stroke="#3a88d8" strokeWidth="1.4" />
              <path d="M1 21h10" stroke="#e0c030" strokeWidth="1.4" />
              <path d="M12 8l8 13" stroke="#111" strokeWidth="2.6" />
              <circle cx="11" cy="4" r="2.4" fill="#fff" />
            </Ico>
          </SideBtn>
          <SideBtn mt={2}>
            <Ico w={24} h={24}>
              <path d="M6 6l8-4 8 3-5 1-9 12c-3 4-7 1-4-2l6-7z" fill="#777" />
              <path d="M3 4l8 10 7 4c2 3-3 5-4 2L6 10z" fill="#8a9098" stroke="#555" strokeWidth=".5" />
              <path d="M1 19h8v4H2z" fill="#e88020" />
            </Ico>
          </SideBtn>
        </div>

        {/* part navigator */}
        <div className="w-[331px] shrink-0 border-r-2 border-[#8a8a8a] bg-white pl-[5px] flex flex-col">
          <div className="h-[27px] shrink-0 pl-[4px] pt-[2px] flex items-center text-[12px] text-[#111]">部件导航器</div>
          <div className="w-[316px] h-[486px] border-x-2 border-t-2 border-[#dcdcdc] flex flex-col overflow-hidden">
            <div className="h-[22px] shrink-0 bg-[#efefef] border-b border-[#d8d8d8] flex items-center pl-[6px] text-[12px] text-[#222]">
              名称
              <svg width="10" height="5" viewBox="0 0 10 5" className="ml-[17px]"><path d="M0 5h10L5 0z" fill="#111" /></svg>
            </div>
            <div className="relative flex-1 min-h-0 overflow-hidden flex flex-col">
              <TreeRow i={0}>
                <Plus />
                <div className="ml-[5px]">
                  <Ico w={16} h={16}>
                    <path d="M8 1l6 3v7l-6 3-6-3V4zM2 4l6 3 6-3M8 7v7M2 11l6-4 6 4" fill="none" stroke="#1a9050" />
                    <path d="M7 15l7-3" stroke="#d83020" strokeWidth="1.2" />
                  </Ico>
                </div>
                <span className="ml-[3px]">模型视图</span>
              </TreeRow>
              <TreeRow i={1}>
                <Plus />
                <div className="ml-[7px]"><Check s={13} c="#1fb31f" /></div>
                <div className="ml-[2px]">
                  <Ico w={15} h={15}>
                    <path d="M1 4l11-3 2 8-11 5z" fill="#fff" stroke="#d02020" strokeWidth="1.2" />
                    <circle cx="7" cy="7" r="3" fill="none" stroke="#3040a8" strokeWidth="1.2" />
                    <path d="M9 8h4v5H9z" fill="#333" />
                  </Ico>
                </div>
                <span className="ml-[4px]">摄像机</span>
              </TreeRow>
              <TreeRow i={0}>
                <Plus minus />
                <div className="ml-[5px]">
                  <Ico w={16} h={14}>
                    <path d="M1 13V2h5l2 2h5v2" fill="#f0e0a0" stroke="#776020" strokeWidth=".7" />
                    <path d="M1 13l3-7h11l-3 7z" fill="#f4c838" stroke="#776020" strokeWidth=".7" />
                  </Ico>
                </div>
                <span className="ml-[3px]">模型历史记录</span>
              </TreeRow>
              <TreeRow i={1} pl={80}>
                <TreeCheck />
                <div className="ml-[2px]">
                  <Ico w={15} h={15}>
                    <path d="M2 5l0 8 10-1zM2 5l7 3 3 4" fill="#eee" stroke="#333" />
                    <path d="M2 0v5M0 2h4" stroke="#1a30c0" />
                    <path d="M8 7l5-3" stroke="#2aa82a" strokeWidth="1.4" />
                    <path d="M7 11l7 3" stroke="#d02020" strokeWidth="1.4" />
                  </Ico>
                </div>
                <span className="ml-[4px]">基准坐标系 (0)</span>
              </TreeRow>
              <TreeRow i={0} pl={80}>
                <TreeCheck />
                <div className="ml-[2px]"><Box s={15} t="#c8d4f4" l="#a0b4ec" r="#6c88d8" o="#4a60a8" /></div>
                <span className="ml-[4px] font-bold">块 (1)</span>
              </TreeRow>
              {Array.from({ length: 18 }, (_, i) => (
                <TreeRow key={i} i={i + 1} />
              ))}
              {/* tree connector dots */}
              <div className="absolute left-[9px] top-[13px] h-[38px] border-l border-dotted border-[#999]" />
              <div className="absolute left-[28px] top-[50px] h-[50px] w-[11px] border-l border-b border-dotted border-[#999]" />
              <div className="absolute left-[28px] top-[70px] w-[11px] border-b border-dotted border-[#999]" />
              {/* column and scroll bar */}
              <div className="absolute left-[199px] top-0 bottom-0 w-px bg-[#e0e0e0]" />
              <div className="absolute left-[299px] top-0 bottom-0 w-[14px] bg-white border-x border-[#dcdcdc]" />
            </div>
            <div className="h-[16px] shrink-0 bg-[#f0f0f0] flex items-center text-[#333]">
              <svg width="16" height="16" viewBox="0 0 16 16" className="shrink-0"><path d="M9 4L5 8l4 4" fill="none" stroke="#333" strokeWidth="1.5" /></svg>
              <div className="w-[216px] h-[14px] bg-[#c8c8c8] ml-[1px]" />
              <div className="flex-1" />
              <svg width="16" height="16" viewBox="0 0 16 16" className="shrink-0"><path d="M6 4l4 4-4 4" fill="none" stroke="#333" strokeWidth="1.5" /></svg>
            </div>
          </div>
        </div>

        {/* graphics window */}
        <div className="flex-1 flex flex-col relative overflow-hidden">
          <div className="h-[23px] shrink-0 bg-white border-b-2 border-[#4a9fbe]" />
          <div className="flex-1 bg-gradient-to-b from-[#b4b5b7] to-[#e6e7e9] to-80%" />
          <svg className="absolute left-0 top-0" width="1002" height="526" viewBox="364 180 1002 526">
            <g stroke="#3a3020" strokeWidth="1" strokeLinejoin="round">
              <path d="M647.3 466L718.3 372.7 846.7 338.7 775.7 431.7z" fill="#ffa500" />
              <path d="M775.7 431.7L846.7 338.7 928.3 474 857.3 567.7z" fill="#ffa000" />
              <path d="M647.3 466L775.7 431.7 857.3 567.7 729.3 602z" fill="#8c5700" />
            </g>
            <g stroke="#d6d6d6" strokeWidth="1" fill="none">
              <path d="M767.3 454.3L818.3 440.7 851 495 800 508.3z" />
              <path d="M767.3 454.3L739 492.3 771.7 546 800 508.3z" />
              <path d="M771.7 546L822.7 532.3 851 495" />
              <path d="M800 508.3L736.7 403.3M800 508.3L901.7 482.7M800 508.3L745 581.7" />
            </g>
            <path d="M736.7 403L730.8 408.5 733 411 738.7 415z" fill="#c8c8c8" stroke="#999" strokeWidth=".5" />
            <path d="M901.7 482.7L888 481.5 889 486.5z" fill="#c8c8c8" stroke="#999" strokeWidth=".5" />
            <path d="M745 581.7L752 571.5 754 575z" fill="#f0f0f0" stroke="#999" strokeWidth=".5" />
            <g fill="#d6d6d6" fontSize="13" fontFamily="Liberation Sans">
              <text x="727" y="401">Y</text>
              <text x="903" y="485">X</text>
              <text x="736" y="592">Z</text>
            </g>
            <g>
              <path d="M393.3 651.7L413.3 638.3 425 653.3 405 666.7z" fill="#c8c8ca" fillOpacity=".8" stroke="#b0b0b0" />
              <path d="M409 653L393.3 651.7M409 653L413.3 638.3M409 653L405 666.7" stroke="#b8b8b8" />
              <path d="M409 653L396 635" stroke="#8ab08a" strokeWidth="2" />
              <path d="M396 635l3 5-4 2z" fill="#228822" />
              <path d="M409 653L433 651.7" stroke="#c09090" strokeWidth="2" />
              <path d="M433 651l-8-2v5z" fill="#a82020" />
              <path d="M409 653L398 670" stroke="#90a0d0" strokeWidth="2" />
              <path d="M398 670l1-6 4 3z" fill="#1a30d0" />
              <text x="388" y="632" fontSize="11" fill="#228822" fontFamily="Liberation Sans">Y</text>
              <text x="433" y="654" fontSize="11" fill="#c83030" fontFamily="Liberation Sans">X</text>
              <text x="390" y="680" fontSize="11" fill="#1a30d0" fontFamily="Liberation Sans">Z</text>
            </g>
          </svg>
          <div className="absolute left-[740px] top-[467px] text-[20px] leading-[26px] text-[#bfc0c2] whitespace-nowrap">激活 Windows</div>
          <div className="absolute left-[740px] top-[494px] text-[14px] leading-[18px] text-[#cbccce] whitespace-nowrap">转到"设置"以激活 Windows。</div>
        </div>
      </div>

      {/* status bar */}
      <div className="h-[22px] shrink-0 border-t-2 border-[#a8a8a8] bg-white flex items-center justify-end pr-[56px] gap-[5px]">
        <Ico w={15} h={16}>
          <path d="M0 0h15v16H0z" fill="#d8d8d8" />
          <path d="M2 13L13 2M2 9L9 2M6 14l8-8M3 3l10 10" stroke="#999" strokeWidth="1.1" />
        </Ico>
        <Ico w={15} h={17}>
          <path d="M1 4V1h3M11 1h3v3M14 13v3h-3M4 16H1v-3" fill="none" stroke="#777" />
          <path d="M3 3h9v11H3z" fill="#fff" stroke="#999" />
          <path d="M4 5h7v7H4z" fill="#4a78b8" />
        </Ico>
      </div>

      {/* taskbar */}
      <div className="h-[40px] shrink-0 bg-gradient-to-r from-[#06222b] to-[#1b2a2e] flex items-stretch text-white relative">
        <div className="w-[48px] flex items-center justify-center">
          <Ico w={16} h={16}>
            <path d="M0 2.2l6.6-.9v6.4H0zM7.4 1.2L16 0v7.7H7.4zM0 8.4h6.6v6.4L0 13.9zM7.4 8.4H16V16l-8.6-1.2z" fill="#fff" />
          </Ico>
        </div>
        <div className="w-[344px] bg-[#f0f0f0] border-t-2 border-[#b8b8b8] flex items-center text-[#333] text-[13px]">
          <span className="ml-[10px] w-[20px] h-[20px] rounded-full border-[3px] border-[#111] shrink-0" />
          <span className="ml-[10px]">在此键入进行搜索</span>
          <Mic size={17} strokeWidth={1.4} className="ml-auto mr-[12px] text-[#222]" />
        </div>
        <div className="ml-[16px] w-[16px] self-center">
          <Ico w={16} h={16}>
            <path d="M0 1h10M0 14.5h10" stroke="#fff" />
            <path d="M1 4.5h8v6H1z" fill="none" stroke="#fff" />
            <path d="M13 1h2v3h-2zM13 6h2v3h-2zM13 11h2v3h-2z" fill="#fff" fillOpacity=".8" />
          </Ico>
        </div>
        <div className="ml-[31px] self-center">
          <Ico w={22} h={24}>
            <path d="M2 14C2 5 8 1 13 1c5 0 8 4 8 10v3H8c0 4 3 6 6 6 3 0 5-1 7-3v5c-2 1-4 2-8 2C6 24 2 20 2 14zM8 10h7c0-3-1-5-3-5s-4 2-4 5z" fill="#0a6cc8" />
          </Ico>
        </div>
        <div className="ml-[27px] self-center">
          <Ico w={22} h={20}>
            <path d="M0 2h8l2 2h12v15H0z" fill="#f4d06a" />
            <path d="M0 6h22v13H0z" fill="#fae29a" />
            <path d="M6 19v-7h10v7h-3v-3H9v3z" fill="#2a9ad8" />
          </Ico>
        </div>
        <div className="ml-[27px] self-center">
          <Ico w={24} h={24}>
            <path d="M12 12L22.4 6A12 12 0 0 0 2.2 5.1z" fill="#e0372e" />
            <path d="M2.2 5.1A12 12 0 0 0 9 23.6L12 12z" fill="#2ea44f" />
            <path d="M9 23.6A12 12 0 0 0 22.4 6L12 12z" fill="#f7c531" />
            <circle cx="12" cy="12" r="5.6" fill="#fff" />
            <circle cx="12" cy="12" r="4.4" fill="#4a86e8" />
          </Ico>
        </div>
        <div className="ml-[25px] self-center">
          <Ico w={23} h={24}>
            <path d="M1 0h21a1 1 0 0 1 1 1v22a1 1 0 0 1-1 1H1a1 1 0 0 1-1-1V1a1 1 0 0 1 1-1z" fill="#1f8ae6" />
            <circle cx="12" cy="12" r="7.5" fill="#fff" />
            <path d="M9 4v16M12 4v16M15 5v14M9 9h7M9 13h7" stroke="#1f8ae6" />
          </Ico>
        </div>
        <div className="ml-[25px] self-center">
          <Ico w={22} h={24}>
            <circle cx="6" cy="3.5" r="3" fill="#7ab828" />
            <path d="M1 8h5v8c0 3 8 3 8 0V4h7v13c0 9-20 9-20 0z" fill="#b4b4ac" />
          </Ico>
        </div>
        <div className="ml-[16px] w-[48px] bg-[#3a4a4e] flex items-center justify-center">
          <Ico w={24} h={28}>
            <path d="M6 1l8 3-2 8z" fill="#d82020" />
            <path d="M3 22C0 15 3 6 11 6c5 0 8 3 8 5-2 5-8 10-16 11z" fill="#2a78d8" />
            <path d="M3 24c8 1 18-6 19-14 1 7-5 17-16 16-2 0-3-1-3-2z" fill="#e8b820" />
          </Ico>
        </div>
        <div className="ml-[13px] self-center">
          <Ico w={21} h={20}>
            <path d="M0 0h21v20H0z" fill="#2a9ae8" />
            <circle cx="7" cy="9" r="4.5" fill="#f0a020" />
            <path d="M7 9V4.5A4.5 4.5 0 0 1 11.5 9z" fill="#fff" />
            <path d="M13 5h6v2h-6zM13 9h6v2h-6zM13 13h6v2h-6zM2 16h9v1H2z" fill="#fff" />
          </Ico>
        </div>
        <FaCog size={20} className="self-center ml-[30px] text-white" />
        <div className="ml-[28px] self-center">
          <Ico w={25} h={22}>
            <ellipse cx="10" cy="9" rx="10" ry="8.5" fill="#6fcf3a" />
            <path d="M4 15l-1 4 5-2z" fill="#6fcf3a" />
            <ellipse cx="17" cy="14" rx="8" ry="6.5" fill="#eee" />
            <path d="M20 19l2 3-5-1z" fill="#eee" />
            <circle cx="7" cy="6.5" r="1.2" fill="#222" />
            <circle cx="13" cy="6.5" r="1.2" fill="#222" />
            <circle cx="15" cy="13" r="1" fill="#777" />
            <circle cx="20" cy="13" r="1" fill="#777" />
          </Ico>
        </div>
        <div className="ml-auto flex items-center">
          <Users size={17} strokeWidth={1.4} className="mr-[21px]" />
          <ChevronUp size={14} className="mr-[9px]" />
          <Ico w={16} h={12}>
            <path d="M1 2h3v2h11v8H1z" fill="none" stroke="#fff" />
            <path d="M5 6h8v4H5z" fill="#fff" />
          </Ico>
          <Plane size={17} strokeWidth={1.4} className="ml-[6px]" />
          <Volume2 size={17} strokeWidth={1.2} className="ml-[6px]" />
          <span className="ml-[11px] text-[13px]">英</span>
          <div className="ml-[8px] w-[70px] flex flex-col items-center text-[12px] leading-[20px]">
            <span>16:37</span>
            <span>2019/5/30</span>
          </div>
          <div className="relative w-[40px] flex items-center justify-center mr-[12px]">
            <Ico w={16} h={16}>
              <path d="M0 0h16v13H5l-3 3v-3H0z" fill="#fff" />
              <path d="M3 3.5h10M3 6.5h10M3 9.5h10" stroke="#1b2a2e" />
            </Ico>
            <span className="absolute left-[21px] top-[2px] w-[16px] h-[16px] rounded-full bg-[#1b2a2e] border border-white text-[11px] leading-[14px] text-center">1</span>
          </div>
        </div>
        {/* open-app underlines */}
        <div className="absolute bottom-0 left-[497px] w-[30px] h-[2px] bg-[#f4a6c0]" />
        <div className="absolute bottom-0 left-[527px] w-[9px] h-[2px] bg-[#c08098]" />
        <div className="absolute bottom-0 left-[545px] w-[40px] h-[2px] bg-[#f4a6c0]" />
        <div className="absolute bottom-0 left-[687px] w-[49px] h-[2px] bg-[#f4a6c0]" />
        <div className="absolute bottom-0 left-[741px] w-[40px] h-[2px] bg-[#f4a6c0]" />
        <div className="absolute bottom-0 left-[790px] w-[40px] h-[2px] bg-[#f4a6c0]" />
        <div className="absolute bottom-0 left-[839px] w-[40px] h-[2px] bg-[#f4a6c0]" />
      </div>

      {/* block dialog */}
      <div className="absolute left-[222px] top-[26px] w-[328px] h-[548px] bg-[#eeeeee] border-x border-b border-[#cfcfcf] flex flex-col">
        <div className="h-[24px] shrink-0 bg-[#55a0b9] text-white flex items-center pl-[6px] pr-[8px] -mx-px">
          <FaCog size={15} />
          <span className="ml-[7px] text-[13px]">长方体</span>
          <RotateCw size={14} strokeWidth={2.4} className="ml-auto mr-[6px] -scale-x-100" />
          <X size={16} strokeWidth={2.6} />
        </div>
        <div className="mx-[5px] mt-[4px] flex flex-col">
          <Card title="类型" h={64}>
            <div className="ml-[2px] mt-[6px] h-[25px] border-2 border-[#dcdcdc] flex items-center justify-between pl-[4px] pr-[7px]">
              <div className="flex items-center gap-[4px] text-[12px] text-[#aaa]">
                <Box s={15} t="#d0d0d0" l="#bbb" r="#aaa" o="#bbb" />
                原点和边长
              </div>
              <Drop gray />
            </div>
          </Card>
          <Card title="原点" h={70}>
            <div className="flex items-start justify-between mt-[6px] pl-[4px]">
              <div className="flex items-center gap-[6px] text-[12px] text-[#b4b4b4] mt-[9px]">
                <Check s={13} c="#a8c4a8" />
                指定点
              </div>
              <div className="flex items-start">
                <div className="w-[24px] h-[24px] mt-[4px] mr-[2px] border-2 border-[#dcdcdc] relative flex items-center justify-center">
                  <Ico w={18} h={18}>
                    <path d="M11 2v8M7 6h8" stroke="#999" />
                    <path d="M1 9c1 4 3 5 6 6" stroke="#c8a888" strokeWidth="2" fill="none" />
                    <circle cx="10" cy="15" r="1" fill="#999" />
                    <circle cx="13" cy="15" r="1" fill="#999" />
                    <circle cx="16" cy="15" r="1" fill="#999" />
                  </Ico>
                </div>
                <div className="w-[32px] h-[32px] border-2 border-[#d0d0d0] flex items-center justify-center">
                  <Ico w={16} h={18}>
                    <path d="M2 4h8v8M5 12h10M7 14h6M9 16h2" fill="none" stroke="#c8a8c8" />
                  </Ico>
                </div>
                <div className="w-[17px] h-[32px] border-y-2 border-r-2 border-[#dcdcdc] flex items-center justify-center">
                  <Drop gray />
                </div>
              </div>
            </div>
          </Card>
          <Card title="尺寸" h={111}>
            <div className="mt-[5px]">
              <Field label="长度 (XC)" />
              <Field label="宽度 (YC)" />
              <Field label="高度 (ZC)" />
            </div>
          </Card>
          <Card title="布尔" h={64}>
            <div className="flex items-center justify-between mt-[6px] pl-[2px]">
              <span className="text-[12px] text-[#b4b4b4]">布尔</span>
              <div className="w-[141px] h-[26px] border-2 border-[#dcdcdc] flex items-center justify-between pl-[4px] pr-[7px]">
                <div className="flex items-center gap-[4px] text-[12px] text-[#999]">
                  <Ico w={15} h={14}>
                    <circle cx="9" cy="8.5" r="5" fill="#9ab0a8" />
                    <path d="M1 1l3 1 1-1 1 2 2 0-1 2-2 1-1-2z" fill="#d8d0a0" />
                  </Ico>
                  无
                </div>
                <Drop gray />
              </div>
            </div>
          </Card>
          <Card title="设置" h={59}>
            <div className="flex items-center gap-[5px] mt-[8px] pl-[2px] text-[12px] text-[#c0c0c0]">
              <span className="w-[13px] h-[13px] border border-[#cfcfcf] flex items-center justify-center">
                <svg width="11" height="11" viewBox="0 0 11 11"><path d="M1 6l3 3 6-7" fill="none" stroke="#bbb" /></svg>
              </span>
              关联原点
            </div>
          </Card>
          <Card title="预览" h={70}>
            <div className="flex items-center justify-end gap-[2px] mt-[6px] text-[12px] text-[#111]">
              撤消结果
              <div className="w-[32px] h-[32px] border-2 border-[#b8b8b8] p-[1px]">
                <div className="w-full h-full border border-dotted border-[#333] flex items-center justify-center">
                  <Ico w={20} h={18}>
                    <path d="M2 7l6-5v3c5-1 11 0 11 5 0 3-2 5-5 7 1-2 2-4 1-6-1-1-4-2-7-1v3z" fill="#3a82e0" stroke="#2a62b8" strokeWidth=".5" />
                  </Ico>
                </div>
              </div>
            </div>
          </Card>
        </div>
        <div className="mx-[5px] -mt-[4px] h-[17px] pt-[4px] border-b-2 border-[#d8d8d8] flex items-center justify-center">
          <svg width="10" height="5" viewBox="0 0 10 5"><path d="M0 5h10L5 0z" fill="#111" /></svg>
        </div>
        <div className="flex justify-end gap-[5px] mt-[8px] pr-[15px] text-[12px]">
          <div className="w-[54px] h-[25px] bg-[#72b2c8] text-white flex items-center justify-center">确定</div>
          <div className="w-[54px] h-[25px] bg-[#dcdcdc] border-2 border-[#a8a8a8] text-[#111] flex items-center justify-center">应用</div>
          <div className="w-[54px] h-[25px] bg-[#dcdcdc] border-2 border-[#a8a8a8] text-[#111] flex items-center justify-center">取消</div>
        </div>
      </div>

      {/* site watermark */}
      <svg className="absolute left-[1083px] top-[673px] pointer-events-none" width="72" height="82" viewBox="0 0 72 82">
        <path d="M36 0l36 20v42L36 82 0 62V20z" fill="#52b4e4" fillOpacity=".6" />
        <path d="M0 55c20 10 50 10 72-2v9L36 82 0 62z" fill="#0f7fae" fillOpacity=".85" />
        <path d="M36 22L52 31v20L36 60 20 51V31z" fill="#ffffff" fillOpacity=".45" stroke="#fff" strokeWidth="3" />
        <path d="M20 31l16 9 16-9M36 40v20" fill="none" stroke="#fff" strokeWidth="2" />
      </svg>
      <div className="absolute left-[1165px] top-[683px] text-[40px] leading-[46px] font-bold text-white/40 tracking-[1px] whitespace-nowrap pointer-events-none">3D世界网</div>
      <div className="absolute left-[1164px] top-[728px] text-[15px] leading-[18px] text-[#7d8a8c] tracking-[3px] font-['Liberation_Sans',sans-serif] whitespace-nowrap pointer-events-none">WWW.3DSJW.COM</div>
    </div>
  );
}
